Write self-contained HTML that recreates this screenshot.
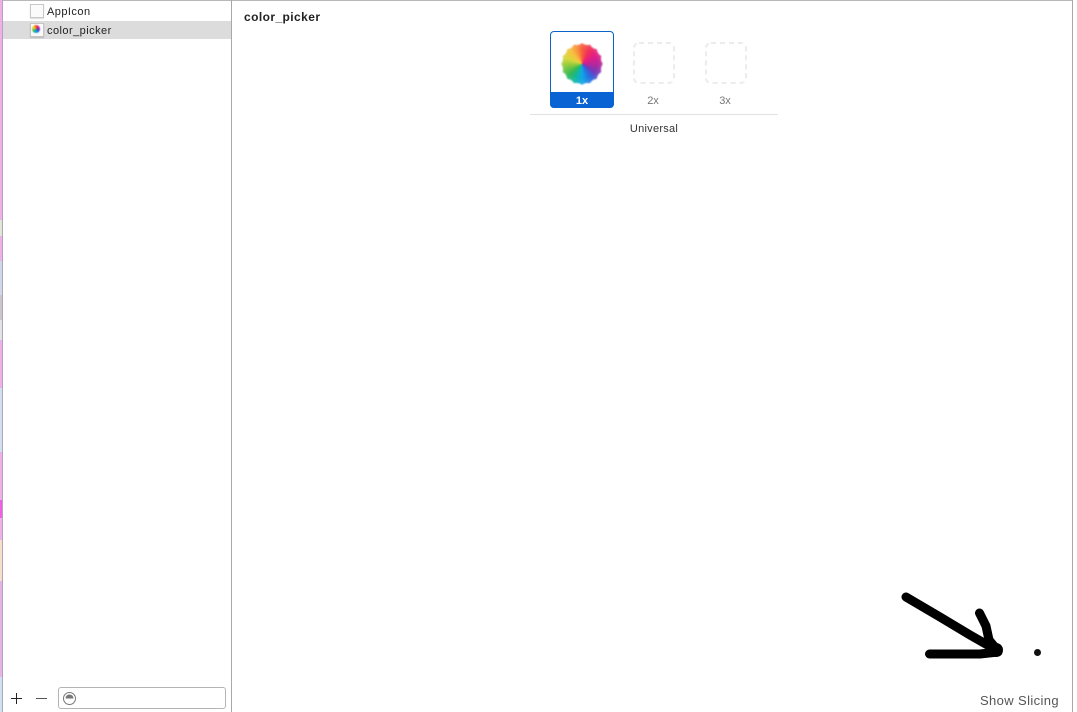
<!DOCTYPE html>
<html><head><meta charset="utf-8">
<style>
html,body{margin:0;padding:0;background:#fff}
body{width:1077px;height:712px;position:relative;overflow:hidden;font-family:"Liberation Sans",sans-serif;color:#222}
.a{position:absolute}
.t{position:absolute;white-space:nowrap;line-height:14px}
.s{position:absolute;left:0;width:2px}
</style></head><body>
<!-- left strip -->
<div class="a" style="left:0;top:0;width:2px;height:712px;background:#eeb0ea"></div>
<div class="s" style="top:220px;height:16px;background:#dfe8d8"></div>
<div class="s" style="top:261px;height:34px;background:#cfd8e6"></div>
<div class="s" style="top:295px;height:25px;background:#c8c8c8"></div>
<div class="s" style="top:320px;height:20px;background:#e2e4e2"></div>
<div class="s" style="top:388px;height:64px;background:#cfe0f0"></div>
<div class="s" style="top:500px;height:18px;background:#f060e6"></div>
<div class="s" style="top:540px;height:41px;background:#f6e0c8"></div>
<div class="s" style="top:581px;height:96px;background:#e4b4e4"></div>
<div class="s" style="top:677px;height:35px;background:#cfe2f2"></div>
<div class="a" style="left:2px;top:0;width:1px;height:712px;background:#b4a4b8"></div>
<!-- top border -->
<div class="a" style="left:3px;top:0;width:1070px;height:1px;background:#b8b8b8"></div>
<!-- sidebar -->
<div class="a" style="left:3px;top:21px;width:228px;height:18px;background:#dcdcdc"></div>
<div class="a" style="left:231px;top:0;width:1px;height:712px;background:#a8a8a8"></div>
<div class="a" style="left:1072px;top:0;width:1px;height:712px;background:#a8a8a8"></div>
<!-- list icons -->
<div class="a" style="left:30px;top:4px;width:12px;height:12px;border:1px solid #c8c8c8;background:#fbfbfb;box-shadow:0 1px 1px #ddd"></div>
<div class="a" style="left:30px;top:23px;width:12px;height:12px;border:1px solid #c4c4c4;background:#fafafa;box-shadow:0 1px 1px #bbb"></div>
<div class="a" style="left:32px;top:25px;width:8px;height:8px;border-radius:50%;filter:blur(.4px);background:conic-gradient(#f4502e,#e0208c,#8a2aa8,#2060e0,#10b0e0,#20b060,#a8d030,#f8d020,#f4502e)"></div>
<div class="t" style="left:47px;top:5px;font-size:11px;letter-spacing:.45px">AppIcon</div>
<div class="t" style="left:47px;top:24px;font-size:11px;letter-spacing:.45px">color_picker</div>
<!-- header -->
<div class="t" style="left:244px;top:10px;font-size:12px;font-weight:bold;letter-spacing:.42px">color_picker</div>
<!-- selected slot -->
<div class="a" style="left:550px;top:31px;width:62px;height:75px;border:1px solid #0a63c9;border-radius:4px;background:#fff"></div>
<div class="a" style="left:550px;top:92px;width:64px;height:16px;background:#0a63d2;border-radius:0 0 4px 4px"></div>
<svg width="0" height="0" style="position:absolute"><defs><clipPath id="sc">
<circle cx="21" cy="21" r="19.600"/>
<circle cx="39" cy="21" r="2.600"/><circle cx="37.630" cy="27.890" r="2.600"/><circle cx="33.730" cy="33.730" r="2.600"/><circle cx="27.890" cy="37.630" r="2.600"/>
<circle cx="21" cy="39" r="2.600"/><circle cx="14.110" cy="37.630" r="2.600"/><circle cx="8.270" cy="33.730" r="2.600"/><circle cx="4.370" cy="27.890" r="2.600"/>
<circle cx="3" cy="21" r="2.600"/><circle cx="4.370" cy="14.110" r="2.600"/><circle cx="8.270" cy="8.270" r="2.600"/><circle cx="14.110" cy="4.370" r="2.600"/>
<circle cx="21" cy="3" r="2.600"/><circle cx="27.890" cy="4.370" r="2.600"/><circle cx="33.730" cy="8.270" r="2.600"/><circle cx="37.630" cy="14.110" r="2.600"/>
</clipPath></defs></svg>
<div class="a" style="left:561px;top:43px;width:42px;height:42px;filter:blur(.7px)">
<div style="width:42px;height:42px;clip-path:url(#sc);background:radial-gradient(circle,rgba(255,255,255,0) 50%,rgba(255,255,255,.3) 100%),conic-gradient(#f8603c 0deg,#f02c60 30deg,#e01c88 60deg,#b0289c 95deg,#6c3cc0 125deg,#2470e0 150deg,#10a8e8 180deg,#10b8a0 205deg,#30b858 230deg,#88c83c 262deg,#d8d83c 290deg,#f8c040 320deg,#f88a3c 345deg,#f8603c 360deg)"></div>
</div>
<div class="t" style="left:550px;top:93.500px;width:64px;text-align:center;font-size:11px;font-weight:bold;color:#fff">1x</div>
<div class="t" style="left:621px;top:93.500px;width:64px;text-align:center;font-size:11px;color:#777">2x</div>
<div class="t" style="left:693px;top:93.500px;width:64px;text-align:center;font-size:11px;color:#777">3x</div>
<div class="a" style="left:530px;top:114px;width:248px;height:1px;background:#e2e2e2"></div>
<div class="t" style="left:530px;top:121.500px;width:248px;text-align:center;font-size:11px;color:#333;letter-spacing:.27px">Universal</div>
<!-- arrow and icons -->
<svg class="a" style="left:0;top:0" width="1077" height="712" viewBox="0 0 1077 712">
<rect x="634" y="43" width="40" height="40" rx="5" fill="none" stroke="#ececec" stroke-width="2" stroke-dasharray="5 4"/>
<rect x="706" y="43" width="40" height="40" rx="5" fill="none" stroke="#ececec" stroke-width="2" stroke-dasharray="5 4"/>
<g fill="none" stroke="#000" stroke-linecap="round" stroke-linejoin="round">
<path d="M906 597 L940 617 L970 635 L998 651" stroke-width="9"/>
<path d="M929.500 654 L980 654 L998 652" stroke-width="9"/>
<path d="M979.500 613 L986 626 L989 640 L998 651" stroke-width="9"/>
</g>
<circle cx="996" cy="650" r="7" fill="#000"/>
<circle cx="1037.500" cy="652.500" r="3.500" fill="#111"/>
<!-- plus / minus -->
<path d="M11 698.500H22M16.500 693V704" stroke="#222" stroke-width="1" fill="none"/>
<path d="M36 698.500H47" stroke="#555" stroke-width="1" fill="none"/>
<!-- filter icon -->
<circle cx="69.500" cy="698.500" r="6" fill="none" stroke="#777" stroke-width="1"/>
<path d="M65.500 698.500a4 4 0 0 1 8 0z" fill="#777"/>
</svg>
<div class="a" style="left:58px;top:687px;width:166px;height:20px;border:1px solid #b4b4b4;border-radius:3px;box-sizing:content-box"></div>
<div class="t" style="left:980px;top:694px;font-size:13px;color:#555;letter-spacing:.38px">Show Slicing</div>
</body></html>
